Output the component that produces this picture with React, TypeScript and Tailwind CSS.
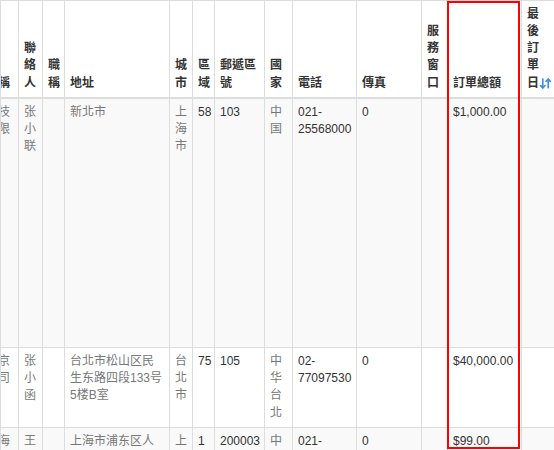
import { ArrowDownUp } from 'lucide-react';

type Cell = { lines: string[]; cjk?: boolean };

const widths = [38, 24, 22, 105, 23, 22, 50, 28, 64, 65, 26, 74, 40];

const headers: string[][] = [
  ['名稱'],
  ['聯', '絡', '人'],
  ['職', '稱'],
  ['地址'],
  ['城', '市'],
  ['區', '域'],
  ['郵遞區', '號'],
  ['國', '家'],
  ['電話'],
  ['傳真'],
  ['服', '務', '窗', '口'],
  ['訂單總額'],
];

const c = (lines: string[], cjk = false): Cell => ({ lines, cjk });

const rows: { height: string; bg: string; cells: Cell[] }[] = [
  {
    height: 'h-[250px]',
    bg: 'bg-[#f9f9f9]',
    cells: [
      c(['科技', '有限'], true),
      c(['张', '小', '联'], true),
      c([]),
      c(['新北市'], true),
      c(['上', '海', '市'], true),
      c(['58']),
      c(['103']),
      c(['中', '国'], true),
      c(['021-', '25568000']),
      c(['0']),
      c([]),
      c(['$1,000.00']),
      c([]),
    ],
  },
  {
    height: 'h-[79px]',
    bg: 'bg-white',
    cells: [
      c(['北京', '公司'], true),
      c(['张', '小', '函'], true),
      c([]),
      c(['台北市松山区民', '生东路四段133号', '5楼B室'], true),
      c(['台', '北', '市'], true),
      c(['75']),
      c(['105']),
      c(['中', '华', '台', '北'], true),
      c(['02-', '77097530']),
      c(['0']),
      c([]),
      c(['$40,000.00']),
      c([]),
    ],
  },
  {
    height: 'h-[80px]',
    bg: 'bg-[#f9f9f9]',
    cells: [
      c(['上海'], true),
      c(['王'], true),
      c([]),
      c(['上海市浦东区人'], true),
      c(['上'], true),
      c(['1']),
      c(['200003']),
      c(['中'], true),
      c(['021-']),
      c(['0']),
      c([]),
      c(['$99.00']),
      c([]),
    ],
  },
];

const cellBase = 'border border-[#ddd] px-[5px] py-[5px] text-[12px] leading-[1.42857] whitespace-nowrap overflow-hidden';
const headCell = `${cellBase} border-b-2 align-bottom text-left font-bold text-[#333]`;

export default function App() {
  return (
    <div
      className="relative w-[554px] h-[450px] overflow-hidden bg-white"
      style={{ fontFamily: '"Liberation Sans", "Noto Sans CJK TC", sans-serif' }}
    >
      <div className="h-full overflow-hidden border-l border-[#ddd]">
        <table className="table-fixed border-collapse ml-[-21px] w-[581px]">
          <colgroup>
            {widths.map((w, i) => (
              <col key={i} style={{ width: w }} />
            ))}
          </colgroup>
          <thead>
            <tr className="bg-white">
              {headers.map((h, i) => (
                <th key={i} className={headCell}>
                  {h.map((l, j) => (
                    <div key={j}>{l}</div>
                  ))}
                </th>
              ))}
              {/* sortable column */}
              <th className={headCell}>
                <div>最</div>
                <div>後</div>
                <div>訂</div>
                <div>單</div>
                <div className="flex items-center">
                  日
                  <ArrowDownUp size={13} strokeWidth={3} className="text-[#3a8ee6]" />
                </div>
              </th>
            </tr>
          </thead>
          <tbody>
            {rows.map((r, i) => (
              <tr key={i} className={r.bg}>
                {r.cells.map((cell, j) => (
                  <td
                    key={j}
                    className={`${cellBase} ${r.height} align-top ${cell.cjk ? 'text-[#777]' : 'text-[#333]'}`}
                  >
                    {cell.lines.map((l, k) => (
                      <div key={k}>{l}</div>
                    ))}
                  </td>
                ))}
              </tr>
            ))}
          </tbody>
        </table>
      </div>

      {/* highlight around the order total column */}
      <div className="absolute left-[447px] top-[1px] w-[73px] h-[448px] border-2 border-[#ff0000] pointer-events-none" />
    </div>
  );
}
